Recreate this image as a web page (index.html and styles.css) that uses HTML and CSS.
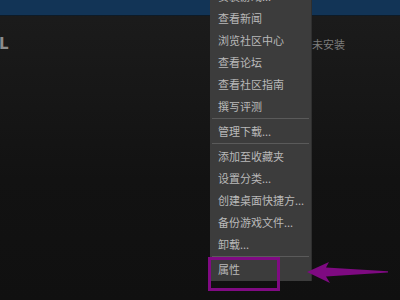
FILE: index.html
```html
<!DOCTYPE html>
<html lang="zh-CN">
<head>
    <meta charset="UTF-8">
    <meta name="viewport" content="width=device-width, initial-scale=1.0">
    <title>游戏库</title>
    <link rel="stylesheet" href="styles.css">
</head>
<body>
    <div id="topbar"></div>

    <div class="game-row">
        <div class="game-title">L</div>
        <div class="game-status">未安装</div>
    </div>

    <!-- context menu -->
    <div id="menu">
        <div class="item">安装游戏...</div>
        <div class="item">查看新闻</div>
        <div class="item">浏览社区中心</div>
        <div class="item">查看论坛</div>
        <div class="item">查看社区指南</div>
        <div class="item">撰写评测</div>
        <div class="sep"></div>
        <div class="item">管理下载...</div>
        <div class="sep"></div>
        <div class="item">添加至收藏夹</div>
        <div class="item">设置分类...</div>
        <div class="item">创建桌面快捷方...</div>
        <div class="item">备份游戏文件...</div>
        <div class="item">卸载...</div>
        <div class="sep"></div>
        <div class="item">属性</div>
    </div>

    <!-- annotation -->
    <div id="mark"></div>
    <svg id="arrow" width="100" height="40" viewBox="0 0 100 40">
        <polygon points="7,17 29,7 26,12.5 88,16.3 88,17.6 26,21.5 30,28" fill="#7e0a81"/>
    </svg>
</body>
</html>
```

FILE: styles.css
```css
body {
    margin: 0;
    width: 400px;
    height: 300px;
    overflow: hidden;
    position: relative;
    background: linear-gradient(#1c1c1c, #121212 60%, #101010);
    font-family: "Noto Sans CJK SC", "Noto Sans", sans-serif;
}

#topbar {
    height: 15px;
    background-color: #123456;
    border-bottom: 1px solid #0e1b27;
}

.game-row {
    display: flex;
    justify-content: space-between;
    align-items: center;
    padding: 18px 55px 0 0;
}

.game-title {
    font-family: "DejaVu Sans", sans-serif;
    font-size: 15px;
    font-weight: bold;
    color: #8c8c8c;
    line-height: 20px;
    margin-left: -1px;
}

.game-status {
    font-size: 11px;
    color: #7c7c7c;
    line-height: 16px;
    margin-top: 0;
}

/* context menu */
#menu {
    position: absolute;
    left: 210px;
    top: -16px;
    width: 101px;
    padding: 1px 0 1px 0;
    background-color: #3c3c3c;
    box-shadow: 1px 0 0 #2f2f2f;
}

.item {
    height: 22px;
    line-height: 22px;
    padding-left: 8px;
    font-size: 11px;
    color: #b9b9b9;
    white-space: nowrap;
}

.sep {
    height: 1px;
    margin: 1px 2px;
    background-color: #5a5a5a;
}

#mark {
    position: absolute;
    left: 208px;
    top: 257px;
    width: 66px;
    height: 28px;
    border: 3px solid #800a83;
}

#arrow {
    position: absolute;
    left: 300px;
    top: 255px;
}
```
